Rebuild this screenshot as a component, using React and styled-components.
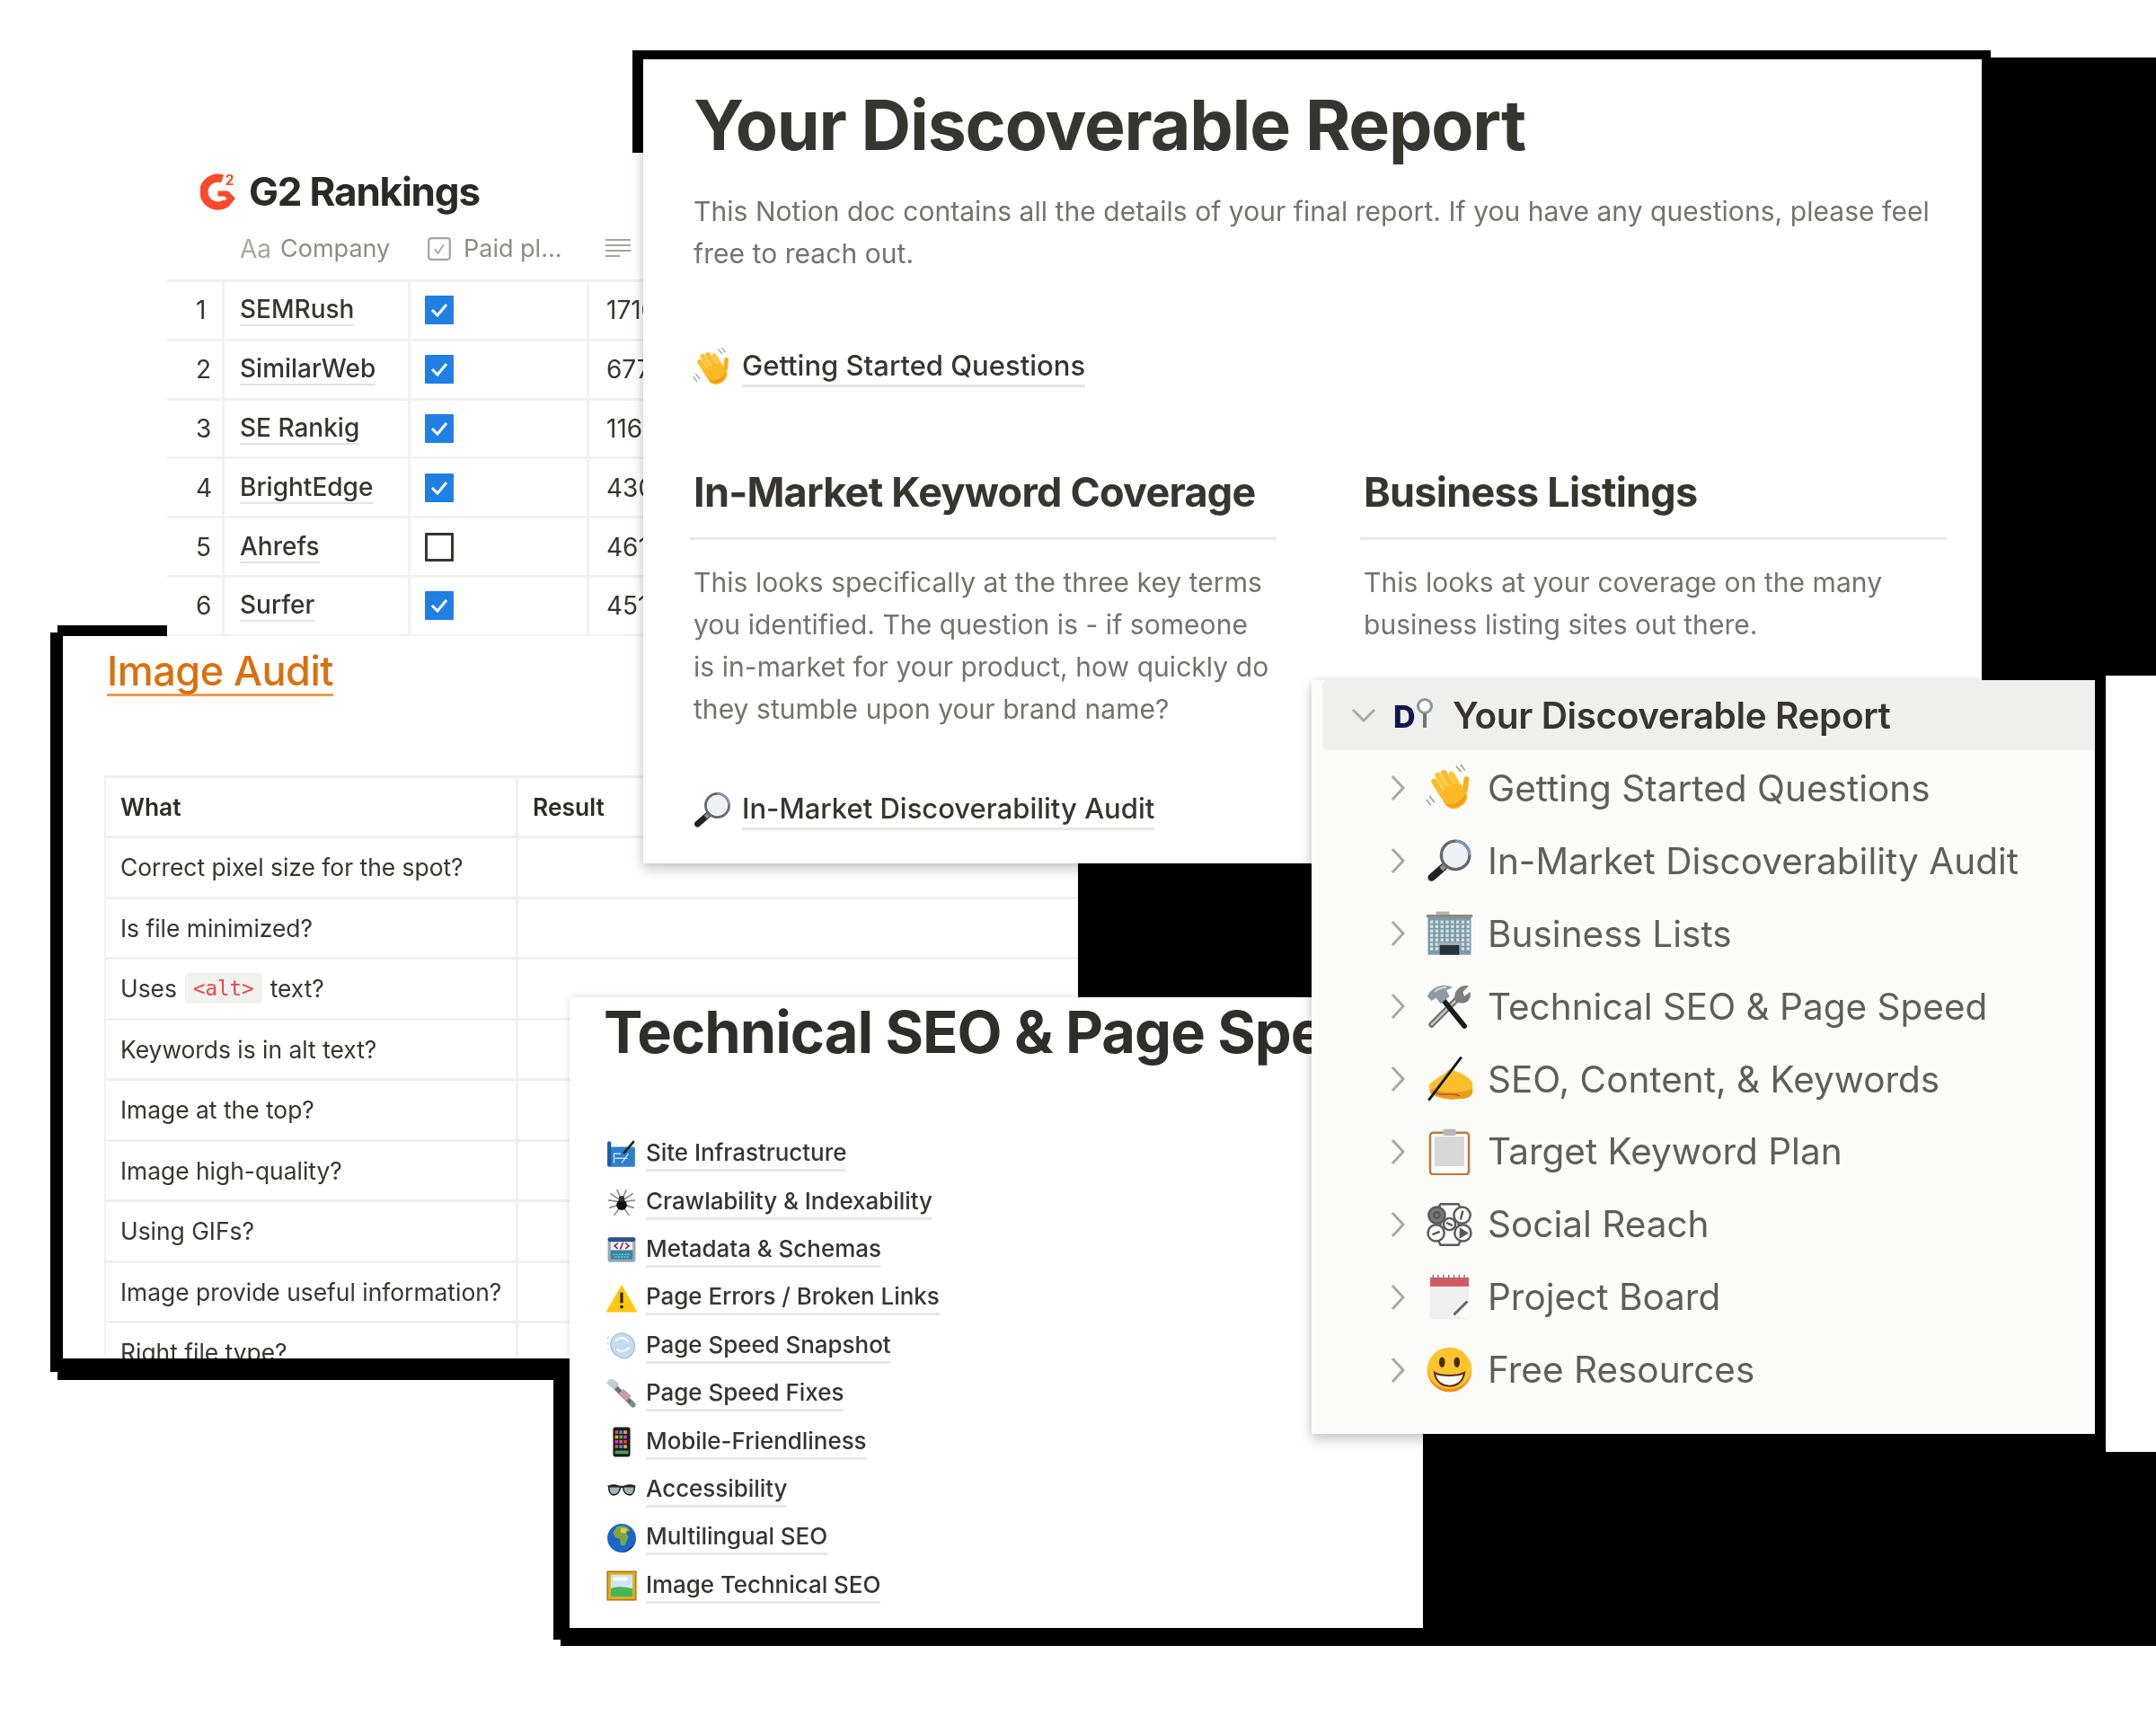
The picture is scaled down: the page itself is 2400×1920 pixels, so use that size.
import React from "react";
import styled, { createGlobalStyle } from "styled-components";

const Global = createGlobalStyle`
  html, body { margin: 0; padding: 0; background: #fff; }
  body { font-family: Inter, "Noto Sans", "Liberation Sans", sans-serif; color: #37352f; }
`;

const Canvas = styled.div`
  position: relative;
  width: 2400px;
  height: 1920px;
  overflow: hidden;
  background: #fff;
`;

const Backdrop = styled.div`
  position: absolute;
  left: ${(p) => p.$x}px;
  top: ${(p) => p.$y}px;
  width: ${(p) => p.$w}px;
  height: ${(p) => p.$h}px;
  background: #000;
`;

const Sheet = styled.section`
  position: absolute;
  left: ${(p) => p.$x}px;
  top: ${(p) => p.$y}px;
  width: ${(p) => p.$w}px;
  height: ${(p) => p.$h}px;
  background: ${(p) => p.$bg || "#fff"};
  box-shadow: ${(p) => p.$shadow || "none"};
  overflow: hidden;
  box-sizing: border-box;
  & > * { filter: blur(0.6px); }
`;

/* ---------- G2 rankings ---------- */
const G2Title = styled.h2`
  display: flex;
  align-items: center;
  gap: 12px;
  margin: 20px 0 0 37px;
  height: 46px;
  font-size: 44px;
  line-height: 46px;
  font-weight: 700;
  letter-spacing: -1.2px;
  color: #2b2a27;
`;
const G2Head = styled.div`
  display: grid;
  grid-template-columns: 62px 207px 199px 1fr;
  height: 78px;
  padding-top: 6px;
  align-items: center;
  border-bottom: 3px solid #f1f1ef;
  box-sizing: border-box;
  font-size: 27px;
  color: #8d8c88;
  & > div { display: flex; align-items: center; padding-left: 19px; gap: 10px; white-space: nowrap; }
  & > div:nth-child(3) { padding-left: 21px; gap: 14px; }
  & > div:nth-child(4) { gap: 0; }
`;
const AaMark = styled.span`
  font-size: 28px;
  color: #a8a7a3;
`;
const G2Row = styled.div`
  display: grid;
  grid-template-columns: 64px 207px 199px 1fr;
  height: 65.8px;
  align-items: stretch;
  border-bottom: 3px solid #f2f2f0;
  box-sizing: border-box;
  font-size: 28px;
  font-weight: 500;
  color: #37352f;
`;
const G2Cell = styled.div`
  display: flex;
  align-items: center;
  padding-left: ${(p) => p.$pad ?? 17}px;
  border-right: 3px solid #f2f2f0;
  white-space: nowrap;
`;
const NumCell = styled(G2Cell)`
  font-weight: 400;
  padding-left: 32px;
`;
const ValueCell = styled.div`
  display: flex;
  align-items: center;
  padding-left: 19px;
  font-weight: 400;
  white-space: nowrap;
`;
const Name = styled.span`
  border-bottom: 2px solid #e3e3e1;
  line-height: 34px;
`;
const Check = styled.span`
  display: flex;
  width: 32px;
  height: 32px;
  box-sizing: border-box;
  align-items: center;
  justify-content: center;
  background: ${(p) => (p.$on ? "#1f7fe3" : "#fff")};
  border: ${(p) => (p.$on ? "none" : "3px solid #37352f")};
  border-radius: 1px;
`;

/* ---------- image audit ---------- */
const AuditTitle = styled.h2`
  display: inline-block;
  margin: 14px 0 0 49px;
  font-size: 45px;
  line-height: 50px;
  font-weight: 500;
  letter-spacing: -0.5px;
  color: #d9700f;
  border-bottom: 3px solid #ee9a4d;
`;
const AuditTable = styled.div`
  margin: 87.5px 0 0 46px;
  width: 1300px;
  border-left: 2px solid #f0f0ee;
  border-top: 3px solid #f0f0ee;
`;
const AuditRow = styled.div`
  display: grid;
  grid-template-columns: 459px 1fr;
  height: 67.5px;
  box-sizing: border-box;
  border-bottom: 3px solid #f0f0ee;
  font-size: 26.4px;
  color: ${(p) => (p.$head ? "#2e2d29" : "#37352f")};
  font-weight: ${(p) => (p.$head ? 600 : 400)};
  & > div { display: flex; align-items: center; padding-left: 16px; gap: 9px; white-space: nowrap; }
  & > div:first-child { border-right: 3px solid #f0f0ee; }
`;
const Code = styled.code`
  font-family: "DejaVu Sans Mono", "Liberation Mono", monospace;
  font-size: 22.5px;
  color: #e5484d;
  background: #f1f1ef;
  border-radius: 5px;
  padding: 4px 9px;
`;

/* ---------- main report ---------- */
const ReportBody = styled.div`
  padding: 0 38px 0 52px;
`;
const ReportTitle = styled.h1`
  margin: 30px 0 0 4px;
  font-size: 77px;
  line-height: 86px;
  font-weight: 700;
  letter-spacing: -1.2px;
  color: #37352f;
`;
const Para = styled.p`
  margin: ${(p) => p.$top ?? 0}px 0 0 4px;
  max-width: ${(p) => p.$max ?? 1396}px;
  font-size: 30px;
  line-height: 47px;
  color: #73726e;
  letter-spacing: 0.05px;
`;
const PageLink = styled.div`
  display: flex;
  align-items: center;
  gap: 11px;
  margin: ${(p) => p.$top}px 0 0 3px;
  font-size: 31px;
  font-weight: 500;
  color: #37352f;
`;
const LinkText = styled.span`
  line-height: 42px;
  border-bottom: 3px solid #e6e6e3;
`;
const Columns = styled.div`
  display: grid;
  grid-template-columns: 653px 653px;
  column-gap: 93px;
  margin-top: 87px;
`;
const SubHead = styled.h2`
  margin: 0;
  padding: 2px 0 0 4px;
  box-sizing: content-box;
  font-size: 45px;
  line-height: 56px;
  font-weight: 700;
  letter-spacing: -0.75px;
  color: #37352f;
  height: 78px;
  border-bottom: 3px solid #e8e8e6;
  white-space: nowrap;
`;

/* ---------- technical seo ---------- */
const TechTitle = styled.h1`
  margin: 0 0 0 38px;
  font-size: 65px;
  line-height: 78px;
  font-weight: 700;
  letter-spacing: -1px;
  white-space: nowrap;
  color: #2f2e2a;
`;
const TechList = styled.div`
  display: flex;
  flex-direction: column;
  margin: 70px 0 0 41px;
`;
const TechItem = styled.div`
  display: flex;
  align-items: center;
  gap: 10px;
  height: 53.4px;
  font-size: 26px;
  font-weight: 500;
  letter-spacing: -0.05px;
  color: #37352f;
`;
const TechLink = styled.span`
  line-height: 36px;
  border-bottom: 3px solid #e8e8e5;
`;

/* ---------- sidebar ---------- */
const SideRoot = styled.div`
  display: flex;
  align-items: center;
  height: 78px;
  margin-left: 12px;
  padding-left: 26px;
  background: #efefee;
  border-radius: 6px 0 0 6px;
  font-size: 40.5px;
  font-weight: 600;
  letter-spacing: -0.4px;
  color: #37352f;
`;
const RootLogo = styled.span`
  display: flex;
  margin: 0 20px 0 13px;
`;
const RootLabel = styled.span`
  padding-top: 1px;
`;
const SideList = styled.div`
  display: flex;
  flex-direction: column;
  margin-top: 2px;
`;
const SideRow = styled.div`
  display: flex;
  align-items: center;
  height: 80.9px;
  padding-left: 76px;
  font-size: 40.5px;
  font-weight: 400;
  color: #5f5e5b;
`;
const Chev = styled.span`
  display: flex;
  width: 40px;
  justify-content: center;
`;
const SideIcon = styled.span`
  display: flex;
  width: 53px;
  margin: 0 16px 0 11px;
`;

/* ---------- drawings ---------- */
const IconBox = styled.svg`
  flex: none;
  display: block;
`;

const Wave = () => (
  <>
    <path d="M5 42 l7 9 M1 47 l6 8 M41 2 l7 8 M47 0 l6 8" stroke="#9a9a98" strokeWidth="1.8" fill="none" />
    <g transform="rotate(-32 34 36)">
      <rect x="18" y="9" width="8" height="32" rx="4" fill="#fbbc2d" />
      <rect x="26.5" y="4" width="8" height="36" rx="4" fill="#fcc53a" />
      <rect x="35" y="6" width="8" height="34" rx="4" fill="#fbbc2d" />
      <rect x="43.5" y="13" width="7" height="28" rx="3.5" fill="#fcc53a" />
      <rect x="48" y="26" width="7" height="22" rx="3.5" transform="rotate(38 51 44)" fill="#f9ae1c" />
      <rect x="18" y="28" width="33" height="32" rx="14" fill="#fbb924" />
      <path d="M18 46 C22 60 42 64 50 48 C44 54 28 56 18 46 Z" fill="#f39a10" />
    </g>
  </>
);
const Magnifier = () => (
  <>
    <path d="M24 40 L8 54" stroke="#222" strokeWidth="10" strokeLinecap="round" />
    <path d="M27 37 L21 43" stroke="#8d8d8d" strokeWidth="7" />
    <circle cx="40" cy="24" r="19" fill="#eef0f3" stroke="#666" strokeWidth="4" />
    <path d="M40 5 A19 19 0 0 1 59 24" stroke="#7b9ac0" strokeWidth="3" fill="none" />
  </>
);
const Building = () => (
  <>
    <rect x="3" y="8" width="58" height="52" fill="#7f9aa3" />
    <rect x="1" y="6" width="62" height="4" fill="#8a8a88" />
    <rect x="14" y="2" width="18" height="4" fill="#b2b2b0" />
    {[14, 20, 26, 32, 38, 44, 50].map((y) =>
      [6, 13, 20, 27, 34, 41, 48, 55].map((x) => <rect key={x + "-" + y} x={x} y={y} width="4" height="4" fill="#cfe2ea" />)
    )}
    <rect x="19" y="46" width="26" height="14" fill="#22333a" />
    <rect x="16" y="44" width="32" height="3" fill="#aab0b0" />
  </>
);
const Tools = () => (
  <>
    <path d="M8 56 L46 18" stroke="#6f6f6f" strokeWidth="8" strokeLinecap="round" />
    <path d="M8 56 L46 18" stroke="#c4c4c4" strokeWidth="3" strokeLinecap="round" />
    <path d="M40 24 C36 12 46 2 58 4 L50 12 L52 18 L60 12 C62 24 52 32 40 24 Z" fill="#7d7d7d" />
    <path d="M52 58 L18 16" stroke="#1c1c1c" strokeWidth="7" strokeLinecap="round" />
    <path d="M2 18 C8 6 22 -1 36 6 L28 10 L32 18 L20 28 L14 20 L8 24 Z" fill="#8f9aa2" />
    <path d="M12 12 C16 8 22 6 28 6" stroke="#d3dbe1" strokeWidth="2.5" fill="none" />
  </>
);
const WritingHand = () => (
  <>
    <path d="M4 40 C10 32 22 28 32 18 C44 22 56 26 63 36 L63 50 C60 56 54 58 46 58 C30 60 14 56 6 50 Z" fill="#fbbe2c" />
    <path d="M6 50 C14 56 30 60 46 58 C54 58 60 56 63 50 L63 44 C44 52 24 50 8 44 Z" fill="#ea9c1c" />
    <path d="M14 50 C24 56 32 48 46 54" stroke="#a8601a" strokeWidth="1.8" fill="none" />
    <path d="M48 2 L4 60" stroke="#111" strokeWidth="3.4" />
  </>
);
const Clipboard = () => (
  <>
    <rect x="6" y="7" width="52" height="56" rx="4" fill="#fff" stroke="#b87a3b" strokeWidth="3" />
    <rect x="12" y="12" width="40" height="40" fill="#d8d8d8" />
    <rect x="23" y="2" width="18" height="9" rx="3" fill="#b6b6b6" />
  </>
);
const Social = () => (
  <g fill="none" stroke="#5a5a5a" strokeWidth="3">
    <path d="M20 5 H44 L50 16 L44 32 L50 48 L44 60 H20 L14 48 L20 32 L14 16 Z" />
    <circle cx="15" cy="20" r="11" fill="#777" />
    <circle cx="15" cy="20" r="4" />
    <circle cx="49" cy="20" r="11" fill="#fbfbfa" />
    <path d="M50 14 L47 26" />
    <circle cx="32" cy="32" r="8" fill="#fbfbfa" />
    <path d="M28 30 L36 34" />
    <circle cx="14" cy="44" r="11" fill="#fbfbfa" />
    <path d="M9 46 L19 42" />
    <circle cx="50" cy="44" r="11" fill="#fbfbfa" />
    <path d="M47 39 L55 44 L47 49 Z" fill="#5a5a5a" />
  </g>
);
const Memo = () => (
  <>
    <rect x="6" y="4" width="52" height="58" fill="#efefef" />
    <rect x="6" y="6" width="52" height="12" fill="#d05b65" />
    <path d="M10 2 V8 M17 2 V8 M24 2 V8 M31 2 V8 M38 2 V8 M45 2 V8 M52 2 V8" stroke="#777" strokeWidth="1.6" />
    <path d="M58 40 L40 56 L58 62 Z" fill="#fbfbfa" />
    <path d="M56 38 L38 56" stroke="#666" strokeWidth="3.5" />
  </>
);
const Smiley = () => (
  <>
    <circle cx="32" cy="32" r="30" fill="#fcc52f" />
    <path d="M2 32 A30 30 0 0 0 62 32 C58 50 46 58 32 58 C18 58 6 50 2 32 Z" fill="#f28f17" />
    <ellipse cx="22" cy="22" rx="4" ry="7" fill="#4a2b10" />
    <ellipse cx="42" cy="22" rx="4" ry="7" fill="#4a2b10" />
    <path d="M12 36 C20 41 44 41 52 36 C50 50 40 54 32 54 C24 54 14 50 12 36 Z" fill="#fff" stroke="#5a2f10" strokeWidth="2.5" />
  </>
);
const Blueprint = () => (
  <>
    <rect x="6" y="16" width="54" height="42" rx="3" fill="#2f7ec9" />
    <rect x="2" y="4" width="8" height="54" rx="4" fill="#1e5da3" />
    <path d="M16 50 V30 H30 M32 50 L46 30 M18 40 H44" stroke="#bfe0f7" strokeWidth="2.6" fill="none" />
    <path d="M58 4 L36 30" stroke="#222" strokeWidth="5" />
  </>
);
const Spider = () => (
  <>
    <path d="M32 30 L8 14 M32 32 L4 28 M32 36 L6 44 M32 38 L16 60 M32 30 L56 14 M32 32 L60 28 M32 36 L58 44 M32 38 L48 60 M32 28 L22 6 M32 28 L42 6" stroke="#8a8a8a" strokeWidth="3" fill="none" />
    <circle cx="32" cy="38" r="11" fill="#111" />
    <circle cx="32" cy="25" r="6" fill="#333" />
  </>
);
const Metadata = () => (
  <>
    <rect x="3" y="6" width="58" height="52" rx="6" fill="#9aa7b4" />
    <rect x="3" y="6" width="58" height="9" rx="4" fill="#2c4f8e" />
    <rect x="9" y="16" width="46" height="16" fill="#f4f2f5" />
    <path d="M24 18 L17 24 L24 30 M40 18 L47 24 L40 30 M35 17 L29 31" stroke="#7b2438" strokeWidth="2.8" fill="none" />
    <rect x="9" y="34" width="46" height="18" fill="#2c8aa0" />
    <path d="M14 42 H50 M18 47 H46" stroke="#a9dfe8" strokeWidth="2" strokeDasharray="4 2" />
  </>
);
const Warning = () => (
  <>
    <path d="M32 5 L63 60 H1 Z" fill="#fdc90f" stroke="#fdc90f" strokeWidth="2" strokeLinejoin="round" />
    <path d="M32 20 V42" stroke="#2b2205" strokeWidth="6" />
    <circle cx="32" cy="50" r="3.6" fill="#2b2205" />
  </>
);
const Dash = () => (
  <>
    <path d="M10 22 C14 8 30 2 42 8 C56 12 62 28 58 42 C52 58 36 62 26 54 C14 50 6 36 10 22 Z" fill="#c6dcec" stroke="#9fc0d8" strokeWidth="2.4" />
    <path d="M20 22 C26 12 40 14 46 24 M22 38 C28 46 40 44 48 36" stroke="#eef6fb" strokeWidth="4.5" fill="none" />
    <path d="M1 16 L6 13 M1 26 L5 26 M2 38 L6 40" stroke="#c6dcec" strokeWidth="3" />
  </>
);
const NutBolt = () => (
  <>
    <path d="M10 8 L56 54" stroke="#7f8b96" strokeWidth="11" strokeLinecap="round" />
    <path d="M22 20 L50 48" stroke="#4f5358" strokeWidth="6" strokeDasharray="3 3" />
    <rect x="2" y="1" width="22" height="16" transform="rotate(42 13 9)" fill="#c4ccd6" />
    <rect x="28" y="26" width="22" height="15" transform="rotate(42 39 33)" fill="#c99aa6" />
  </>
);
const Phone = () => (
  <>
    <rect x="14" y="1" width="36" height="62" rx="5" fill="#1b1b1b" />
    {[8, 18, 28, 38].map((y, i) =>
      [18, 27, 36].map((x, j) => (
        <rect key={x + "-" + y} x={x} y={y} width="7" height="7" fill={["#e9473b", "#3d8fe0", "#f0a52c", "#45b35a", "#b545c9", "#e05a8a"][(i * 2 + j) % 6]} />
      ))
    )}
    <rect x="18" y="50" width="28" height="7" fill="#3fa35a" />
  </>
);
const Glasses = () => (
  <>
    <path d="M2 24 C10 20 20 20 28 24 H36 C44 20 54 20 62 24 L58 28 H6 Z" fill="#222" />
    <path d="M5 26 H29 C29 38 22 43 15 43 C9 43 5 36 5 26 Z" fill="#9bb8b4" stroke="#222" strokeWidth="3" />
    <path d="M35 26 H59 C59 36 55 43 49 43 C42 43 35 38 35 26 Z" fill="#9bb8b4" stroke="#222" strokeWidth="3" />
  </>
);
const Globe = () => (
  <>
    <circle cx="32" cy="32" r="30" fill="#1c66c9" />
    <path d="M32 62 A30 30 0 0 0 62 32 L58 46 L42 58 Z" fill="#123a8a" />
    <path d="M22 8 C32 4 44 6 50 16 L42 20 L46 30 L38 48 L30 46 L28 34 L18 30 L14 20 Z" fill="#7ba83a" />
    <path d="M30 10 L44 12 L40 22 L30 20 Z" fill="#e2c75a" />
  </>
);
const Picture = () => (
  <>
    <rect x="2" y="2" width="60" height="60" fill="#e9a90f" stroke="#8a5a12" strokeWidth="2" />
    <rect x="9" y="9" width="46" height="46" fill="#cfe6f2" />
    <rect x="14" y="14" width="30" height="7" rx="3" fill="#fff" />
    <path d="M9 38 C22 32 40 34 55 38 V55 H9 Z" fill="#46b558" />
  </>
);

const ICONS = { Wave, Magnifier, Building, Tools, WritingHand, Clipboard, Social, Memo, Smiley, Blueprint, Spider, Metadata, Warning, Dash, NutBolt, Phone, Glasses, Globe, Picture };

const Emoji = ({ name, size }) => {
  const Drawing = ICONS[name];
  return (
    <IconBox width={size} height={size} viewBox="0 0 64 64">
      <Drawing />
    </IconBox>
  );
};

const G2Logo = () => (
  <IconBox width="42" height="41" viewBox="0 0 41 40">
    <path d="M24 6 A15 15 0 1 0 28 32" fill="none" stroke="#ff492c" strokeWidth="9" />
    <path d="M19 19 H30 L38 27 L30 37 L25 31 L29 27 L26 25 H19 Z" fill="#ff492c" />
    <text x="27" y="13" fontFamily="Inter, sans-serif" fontSize="15" fontWeight="700" fill="#ff492c">2</text>
  </IconBox>
);

const Caret = ({ down }) => (
  <IconBox width={down ? 30 : 20} height={down ? 20 : 34} viewBox={down ? "0 0 30 20" : "0 0 20 34"}>
    <path d={down ? "M3 4 L15 16 L27 4" : "M4 4 L16 17 L4 30"} fill="none" stroke="#aaa9a6" strokeWidth="3" />
  </IconBox>
);

const DiscoverLogo = () => (
  <IconBox width="46" height="40" viewBox="0 0 46 40">
    <text x="0" y="34" fontFamily="Inter, sans-serif" fontSize="34" fontWeight="800" fill="#14144f">D</text>
    <circle cx="35" cy="10" r="7.5" fill="#fff" stroke="#8f949a" strokeWidth="3" />
    <path d="M35 18 V34" stroke="#6f747a" strokeWidth="4" />
  </IconBox>
);

const CheckMark = () => (
  <IconBox width="22" height="22" viewBox="0 0 22 22">
    <path d="M3 11 L9 17 L19 5" fill="none" stroke="#fff" strokeWidth="3" />
  </IconBox>
);

const HeadCheck = () => (
  <IconBox width="26" height="26" viewBox="0 0 26 26">
    <rect x="1.2" y="1.2" width="23.6" height="23.6" rx="3" fill="none" stroke="#a5a4a1" strokeWidth="2.2" />
    <path d="M8 13 L11.5 18 L18 8" fill="none" stroke="#a5a4a1" strokeWidth="1.8" />
  </IconBox>
);

const HeadLines = () => (
  <IconBox width="30" height="28" viewBox="0 0 30 28">
    <path d="M1 4 H29 M1 10 H29 M1 16 H29 M1 22 H17" stroke="#a5a4a1" strokeWidth="2.2" />
  </IconBox>
);

const RANKS = [
  ["SEMRush", true, "1710"],
  ["SimilarWeb", true, "6770"],
  ["SE Rankig", true, "1160"],
  ["BrightEdge", true, "4300"],
  ["Ahrefs", false, "4610"],
  ["Surfer", true, "4510"],
];

const AUDIT = [
  "Correct pixel size for the spot?",
  "Is file minimized?",
  null,
  "Keywords is in alt text?",
  "Image at the top?",
  "Image high-quality?",
  "Using GIFs?",
  "Image provide useful information?",
  "Right file type?",
];

const TECH = [
  ["Blueprint", "Site Infrastructure"],
  ["Spider", "Crawlability & Indexability"],
  ["Metadata", "Metadata & Schemas"],
  ["Warning", "Page Errors / Broken Links"],
  ["Dash", "Page Speed Snapshot"],
  ["NutBolt", "Page Speed Fixes"],
  ["Phone", "Mobile-Friendliness"],
  ["Glasses", "Accessibility"],
  ["Globe", "Multilingual SEO"],
  ["Picture", "Image Technical SEO"],
];

const SIDE = [
  ["Wave", "Getting Started Questions"],
  ["Magnifier", "In-Market Discoverability Audit"],
  ["Building", "Business Lists"],
  ["Tools", "Technical SEO & Page Speed"],
  ["WritingHand", "SEO, Content, & Keywords"],
  ["Clipboard", "Target Keyword Plan"],
  ["Social", "Social Reach"],
  ["Memo", "Project Board"],
  ["Smiley", "Free Resources"],
];

const SOFT = "0 6px 14px rgba(0,0,0,.22), 0 0 6px rgba(0,0,0,.08)";

export default function App() {
  return (
    <Canvas>
      <Global />
      <Backdrop $x={704} $y={56} $w={1512} $h={1054} />
      <Backdrop $x={2206} $y={64} $w={194} $h={688} />
      <Backdrop $x={2206} $y={700} $w={138} $h={916} />
      <Backdrop $x={1584} $y={1596} $w={760} $h={236} />
      <Backdrop $x={2344} $y={1616} $w={56} $h={216} />

      <Backdrop $x={56} $y={704} $w={560} $h={823} />
      <Backdrop $x={64} $y={696} $w={552} $h={840} />
      <Backdrop $x={616} $y={1512} $w={18} $h={313} />
      <Backdrop $x={624} $y={1812} $w={960} $h={20} />

      <Sheet $x={70} $y={708} $w={1130} $h={804}>
        <AuditTitle>Image Audit</AuditTitle>
        <AuditTable>
          <AuditRow $head>
            <div>What</div>
            <div>Result</div>
          </AuditRow>
          {AUDIT.map((text, i) => (
            <AuditRow key={i}>
              <div>
                {text ?? (
                  <>
                    Uses <Code>&lt;alt&gt;</Code> text?
                  </>
                )}
              </div>
              <div />
            </AuditRow>
          ))}
        </AuditTable>
      </Sheet>

      <Sheet $x={186} $y={170} $w={530} $h={538}>
        <G2Title>
          <G2Logo />
          G2 Rankings
        </G2Title>
        <G2Head>
          <div />
          <div>
            <AaMark>Aa</AaMark> Company
          </div>
          <div>
            <HeadCheck /> Paid pl...
          </div>
          <div>
            <HeadLines />
          </div>
        </G2Head>
        {RANKS.map(([name, on, value], i) => (
          <G2Row key={name}>
            <NumCell>{i + 1}</NumCell>
            <G2Cell>
              <Name>{name}</Name>
            </G2Cell>
            <G2Cell $pad={16}>
              <Check $on={on}>{on && <CheckMark />}</Check>
            </G2Cell>
            <ValueCell>{value}</ValueCell>
          </G2Row>
        ))}
      </Sheet>

      <Sheet $x={716} $y={66} $w={1490} $h={895} $shadow={SOFT}>
        <ReportBody>
          <ReportTitle>Your Discoverable Report</ReportTitle>
          <Para $top={30}>
            This Notion doc contains all the details of your final report. If you have any questions, please feel free to reach out.
          </Para>
          <PageLink $top={80}>
            <Emoji name="Wave" size={44} />
            <LinkText>Getting Started Questions</LinkText>
          </PageLink>
          <Columns>
            <div>
              <SubHead>In-Market Keyword Coverage</SubHead>
              <Para $top={24} $max={643}>
                This looks specifically at the three key terms you identified. The question is - if someone is in-market for your product, how quickly do they stumble upon your brand name?
              </Para>
              <PageLink $top={66}>
                <Emoji name="Magnifier" size={44} />
                <LinkText>In-Market Discoverability Audit</LinkText>
              </PageLink>
            </div>
            <div>
              <SubHead>Business Listings</SubHead>
              <Para $top={24} $max={643}>
                This looks at your coverage on the many business listing sites out there.
              </Para>
            </div>
          </Columns>
        </ReportBody>
      </Sheet>

      <Sheet $x={634} $y={1110} $w={950} $h={702} $shadow="0 0 8px rgba(0,0,0,.14)">
        <TechTitle>Technical SEO & Page Speed</TechTitle>
        <TechList>
          {TECH.map(([icon, text]) => (
            <TechItem key={text}>
              <Emoji name={icon} size={34} />
              <TechLink>{text}</TechLink>
            </TechItem>
          ))}
        </TechList>
      </Sheet>

      <Sheet $x={1460} $y={757} $w={872} $h={839} $bg="#fbfbfa" $shadow={SOFT}>
        <SideRoot>
          <Chev>
            <Caret down />
          </Chev>
          <RootLogo>
            <DiscoverLogo />
          </RootLogo>
          <RootLabel>Your Discoverable Report</RootLabel>
        </SideRoot>
        <SideList>
          {SIDE.map(([icon, text]) => (
            <SideRow key={text}>
              <Chev>
                <Caret />
              </Chev>
              <SideIcon>
                <Emoji name={icon} size={53} />
              </SideIcon>
              {text}
            </SideRow>
          ))}
        </SideList>
      </Sheet>
    </Canvas>
  );
}
